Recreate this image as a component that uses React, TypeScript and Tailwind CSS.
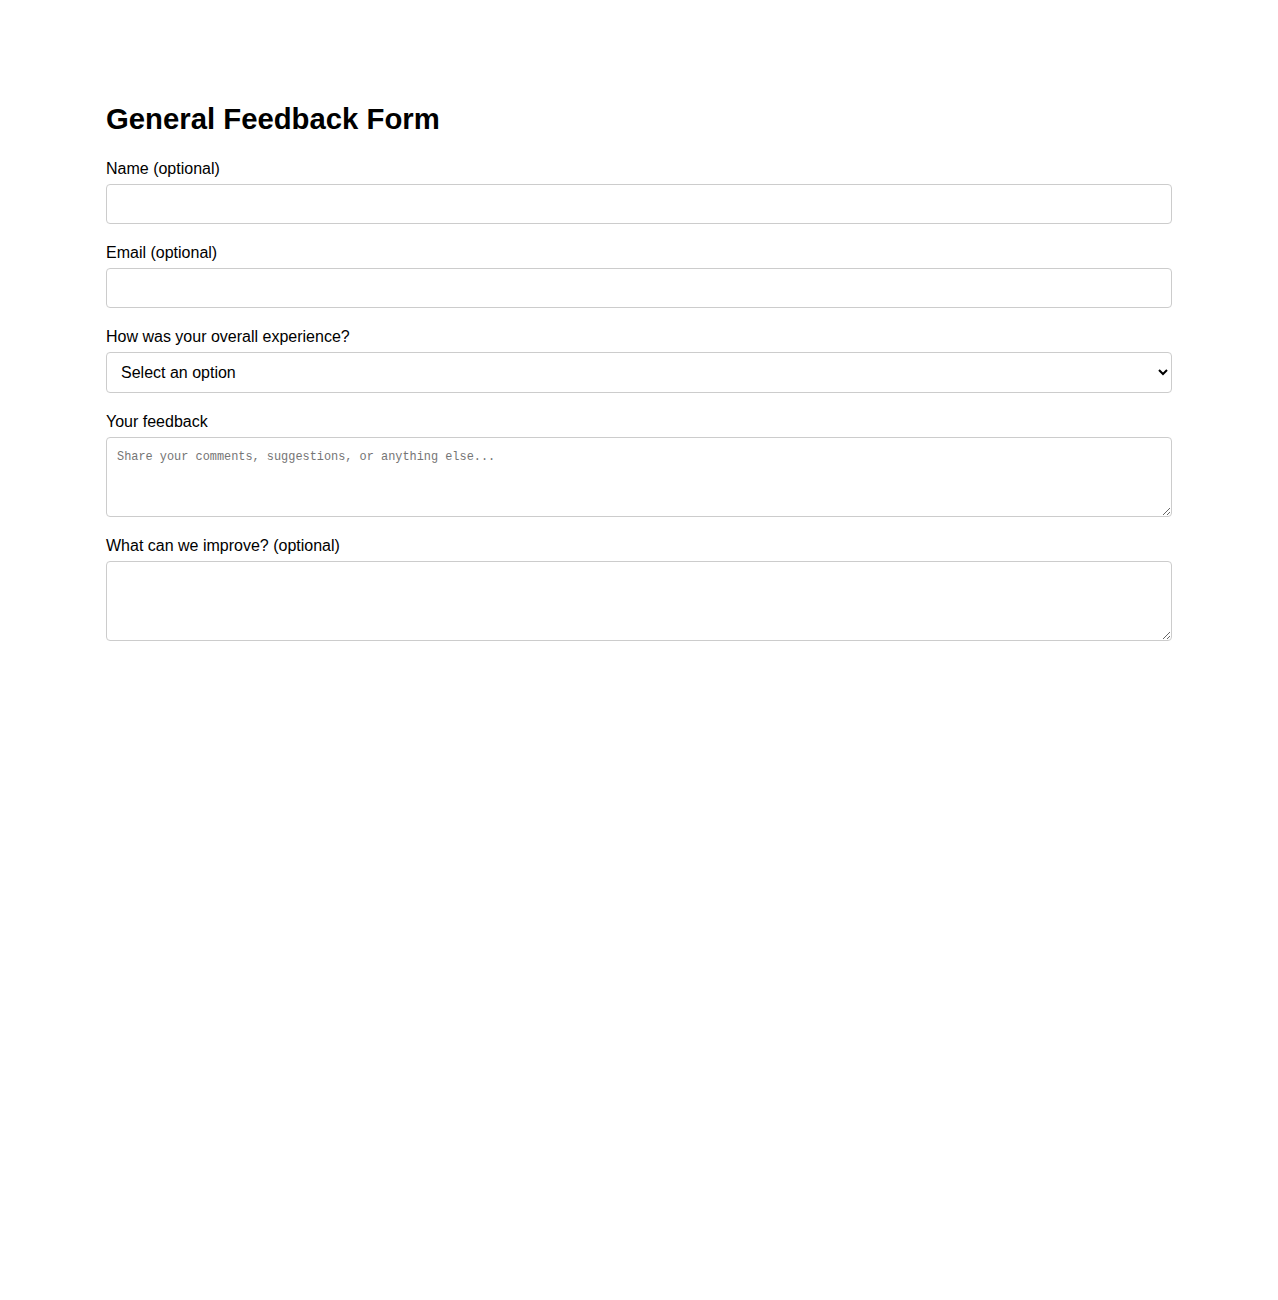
import React from 'react'

const labelClass = 'block text-base leading-[20px] mb-[5px] text-black'
const fieldClass = 'block w-full border border-[#cccccc] rounded-[4px] bg-white'

function Field({ label, children }: { label: string; children: React.ReactNode }) {
  return (
    <div className="mb-[19px]">
      <label className={labelClass}>{label}</label>
      {children}
    </div>
  )
}

export default function App() {
  return (
    <div className="min-h-[1300px] bg-white font-['Liberation_Sans',Arial,sans-serif] text-black">
      <div className="mx-auto w-[1066px] pt-[102px]">
        <h1 className="text-[29.3px] leading-[34px] font-bold mb-[23px]">General Feedback Form</h1>

        <Field label="Name (optional)">
          <input type="text" className={`${fieldClass} h-[40px] px-[10px] text-base`} />
        </Field>

        <Field label="Email (optional)">
          <input type="email" className={`${fieldClass} h-[40px] px-[10px] text-base`} />
        </Field>

        <Field label="How was your overall experience?">
          <select className={`${fieldClass} h-[41px] px-[10px] text-base`} defaultValue="">
            <option value="" disabled>
              Select an option
            </option>
            <option value="excellent">Excellent</option>
            <option value="good">Good</option>
            <option value="average">Average</option>
            <option value="poor">Poor</option>
          </select>
        </Field>

        <Field label="Your feedback">
          <textarea
            placeholder="Share your comments, suggestions, or anything else..."
            className={`${fieldClass} h-[80px] px-[10px] pt-[11px] pb-[9px] font-['Liberation_Mono',monospace] text-[11.9px] placeholder:text-[#757575]`}
          />
        </Field>

        <Field label="What can we improve? (optional)">
          <textarea
            className={`${fieldClass} h-[80px] px-[10px] pt-[11px] pb-[9px] font-['Liberation_Mono',monospace] text-[11.9px]`}
          />
        </Field>
      </div>
    </div>
  )
}
